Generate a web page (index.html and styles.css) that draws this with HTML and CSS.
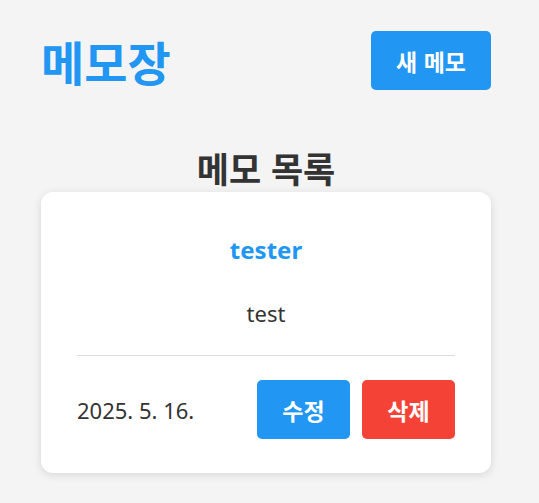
FILE: index.html
```html
<!DOCTYPE html>
<html lang="ko">
<head>
<meta charset="utf-8">
<title>메모장</title>
<link rel="stylesheet" href="styles.css">
</head>
<body>
<div class="app">
  <header class="header">
    <h1 class="title">메모장</h1>
    <button class="btn btn-blue btn-new">새 메모</button>
  </header>
  <section class="list">
    <h2 class="list-title">메모 목록</h2>
    <article class="card">
      <h3 class="memo-title">tester</h3>
      <p class="memo-body">test</p>
      <div class="divider"></div>
      <div class="memo-footer">
        <span class="memo-date">2025. 5. 16.</span>
        <div class="actions">
          <button class="btn btn-blue btn-sm">수정</button>
          <button class="btn btn-red btn-sm">삭제</button>
        </div>
      </div>
    </article>
  </section>
</div>
</body>
</html>
```
FILE: styles.css
```css
* { box-sizing: border-box; }
html, body { margin: 0; padding: 0; }
body {
  background: #f4f4f4;
  font-family: "Noto Sans", "Noto Sans CJK KR", sans-serif;
  color: #333;
  height: 503px;
  overflow: hidden;
}
.app {
  width: 450px;
  margin-left: 41px;
  padding-top: 31px;
}
.header {
  display: flex;
  justify-content: space-between;
  align-items: center;
  height: 59px;
}
.title {
  margin: 0;
  font-family: "Noto Sans CJK KR", sans-serif;
  font-size: 47px;
  font-weight: 700;
  line-height: 1;
  color: #2196f3;
}
.btn {
  border: none;
  border-radius: 5px;
  color: #fff;
  font-family: "Noto Sans CJK KR", sans-serif;
  font-weight: 700;
  cursor: pointer;
}
.btn-blue { background: #2196f3; }
.btn-red { background: #f44336; }
.btn-new {
  width: 120px;
  height: 59px;
  font-size: 23px;
}
.list {
  margin-top: 56px;
}
.list-title {
  margin: 0;
  text-align: center;
  font-family: "Noto Sans CJK KR", sans-serif;
  font-size: 35px;
  font-weight: 700;
  line-height: 44px;
  color: #333;
}
.card {
  margin-top: 2px;
  background: #fff;
  border-radius: 12px;
  box-shadow: 0 2px 8px rgba(0,0,0,0.12);
  padding: 36px 36px 35px;
  height: 281px;
}
.memo-title {
  margin: 0;
  text-align: center;
  font-size: 24px;
  font-weight: 700;
  line-height: 44px;
  color: #2196f3;
}
.memo-body {
  margin: 0;
  padding-top: 27px;
  text-align: center;
  font-size: 22px;
  line-height: 28px;
  color: #333;
}
.divider {
  margin-top: 28px;
  border-top: 1px solid #ddd;
}
.memo-footer {
  margin-top: 24px;
  display: flex;
  justify-content: space-between;
  align-items: center;
}
.memo-date {
  font-size: 22px;
  color: #333;
}
.actions {
  display: flex;
  gap: 12px;
}
.btn-sm {
  width: 93px;
  height: 59px;
  font-size: 23px;
}
```
